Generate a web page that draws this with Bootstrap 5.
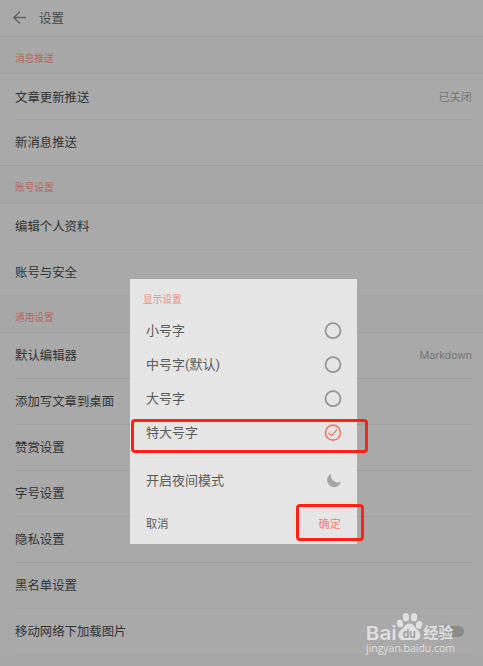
<!DOCTYPE html>
<html lang="zh-CN">
<head>
<meta charset="utf-8">
<meta name="viewport" content="width=device-width, initial-scale=1">
<title>设置</title>
<link href="https://cdn.jsdelivr.net/npm/bootstrap@5.3.0/dist/css/bootstrap.min.css" rel="stylesheet">
<style>
  body { font-family: Roboto, "Noto Sans CJK SC", sans-serif; font-size: 12.4px; line-height: 18px; background: #a9a9a9; color: #333; height: 666px; overflow: hidden; }
  .screen { height: 666px; overflow: hidden; }
  .topbar { height: 37px; border-bottom: 1px solid #9f9f9f; padding: 0 13px; gap: 13px; color: #484848; }
  .topbar span { padding-top: 1px; }
  .group-title { height: 37px; padding: 8px 15px 0; font-size: 9.7px; color: #b5695f; background: #a7a7a7; border-bottom: 1px solid #a1a1a1; }
  .group-title.tall { height: 38px; padding-top: 7px; }
  .settings { padding: 0 11px 0 15px; }
  .settings .setting { height: 46px; border-bottom: 1px solid #9f9f9f; padding-top: 1px; }
  .settings .setting.faint { border-color: #a5a5a5; }
  .settings.full .setting:last-child { margin: 0 -11px 0 -15px; padding: 1px 11px 0 15px; }
  .settings.messages .setting { padding-top: 2px; }
  .value { font-size: 11.2px; color: #777; }
  .tailband { height: 12px; background: #a7a7a7; }
  .toggle { width: 26px; height: 16px; margin-right: 8px; margin-bottom: 3px; }
  .dialog { left: 130px; top: 279px; width: 227px; height: 265px; background: #e5e5e5; color: #5a5a5a; font-size: 13px; }
  .dialog-title { height: 35px; padding: 12px 13px 0; font-size: 9.7px; color: #ec8f82; }
  .choice { height: 34px; padding: 0 15px 0 16px; }
  .rule { height: 1px; margin: 7px 13px 0; background: #e0e0e0; }
  .night { height: 45px; padding: 0 15px 0 16px; }
  .actions { height: 42px; padding: 1px 16px 0; font-size: 11.2px; }
  .accent { color: #ee8374; }
  .frame { border: 3px solid #ff2213; border-radius: 4px; }
  .frame-choice { left: 131px; top: 419px; width: 237px; height: 34px; }
  .frame-ok { left: 296px; top: 504px; width: 68px; height: 37px; }
  .brand { left: 364px; top: 610px; }
  svg { display: block; }
</style>
</head>
<body>
<main class="screen position-relative">
  <header class="topbar d-flex align-items-center">
    <svg width="13" height="14" viewBox="0 0 13 14" fill="none" stroke="#626262" stroke-width="1.3"><path d="M7 .5.800 6.500l6.200 6M.8 6.500H13"/></svg>
    <span>设置</span>
  </header>

  <div class="group-title d-flex align-items-center">消息推送</div>
  <div class="settings full messages">
    <div class="setting d-flex align-items-center justify-content-between"><span>文章更新推送</span><span class="value">已关闭</span></div>
    <div class="setting d-flex align-items-center">新消息推送</div>
  </div>

  <div class="group-title tall d-flex align-items-center">账号设置</div>
  <div class="settings full">
    <div class="setting faint d-flex align-items-center">编辑个人资料</div>
    <div class="setting faint d-flex align-items-center">账号与安全</div>
  </div>

  <div class="group-title d-flex align-items-center">通用设置</div>
  <div class="settings">
    <div class="setting d-flex align-items-center justify-content-between"><span>默认编辑器</span><span class="value">Markdown</span></div>
    <div class="setting d-flex align-items-center">添加写文章到桌面</div>
    <div class="setting d-flex align-items-center">赞赏设置</div>
    <div class="setting d-flex align-items-center">字号设置</div>
    <div class="setting d-flex align-items-center">隐私设置</div>
    <div class="setting faint d-flex align-items-center">黑名单设置</div>
    <div class="setting faint d-flex align-items-center justify-content-between"><span>移动网络下加载图片</span>
      <svg class="toggle" viewBox="0 0 26 16"><rect x="4" y="3" width="22" height="11" rx="5.5" fill="#8a8a8a"/><circle cx="6" cy="8" r="7.5" fill="#9d9d9d"/></svg>
    </div>
  </div>
  <div class="tailband"></div>

  <section class="dialog position-absolute">
    <div class="dialog-title">显示设置</div>
    <div class="choice d-flex align-items-center justify-content-between"><span>小号字</span><svg width="18" height="18" fill="none" stroke="#969696" stroke-width="1.8"><circle cx="9" cy="8.700" r="7.500"/></svg></div>
    <div class="choice d-flex align-items-center justify-content-between"><span>中号字(默认)</span><svg width="18" height="18" fill="none" stroke="#969696" stroke-width="1.8"><circle cx="9" cy="8.700" r="7.500"/></svg></div>
    <div class="choice d-flex align-items-center justify-content-between"><span>大号字</span><svg width="18" height="18" fill="none" stroke="#969696" stroke-width="1.8"><circle cx="9" cy="8.700" r="7.500"/></svg></div>
    <div class="choice d-flex align-items-center justify-content-between"><span>特大号字</span><svg width="18" height="18" fill="none" stroke="#ed7b69" stroke-width="1.7"><circle cx="9" cy="8.700" r="7.500"/><path d="m4.500 8.800 3 2.900 5.700-6.200" stroke-width="1.2"/></svg></div>
    <div class="rule"></div>
    <div class="night d-flex align-items-center justify-content-between"><span>开启夜间模式</span><svg width="16" height="16" viewBox="0 0 16 16"><path d="M5 .8C.3 3 0 9.500 3.700 12.600c3.900 3.200 9.800 1.700 11.300-3.800C10.200 11.200 4 7.300 5 .8Z" fill="#a6a6a6"/></svg></div>
    <div class="actions d-flex align-items-center justify-content-between"><span>取消</span><span class="accent">确定</span></div>
  </section>

  <div class="frame frame-choice position-absolute"></div>
  <div class="frame frame-ok position-absolute"></div>

  <svg class="brand position-absolute" width="96" height="48" viewBox="0 0 96 48" fill="#dfdfdf">
    <text x="1.800" y="29.500" font-family="Inter, sans-serif" font-weight="600" font-size="19" textLength="31" lengthAdjust="spacingAndGlyphs">Bai</text>
    <ellipse cx="36" cy="13.500" rx="3.100" ry="4" transform="rotate(-15 36 13.500)"/>
    <ellipse cx="42" cy="7.300" rx="3.100" ry="4.300"/>
    <ellipse cx="50" cy="7.300" rx="3.100" ry="4.300"/>
    <ellipse cx="55" cy="15" rx="3.100" ry="4" transform="rotate(15 55 15)"/>
    <path d="M45.500 13.500c-4 0-5 3.500-7.500 5.500-3.500 2.500-4 5-3.300 7.500 1.200 5 6 3.500 10.800 3.500s9.500 1.500 10.700-3.500c.6-3-.7-5-3.700-7.500-2.500-2-3-5.500-7-5.500Z"/>
    <text x="38.800" y="28" fill="#989898" font-family="Inter, sans-serif" font-weight="600" font-size="11.500" textLength="13" lengthAdjust="spacingAndGlyphs">du</text>
    <text x="59.200" y="28.300" font-family="Noto Sans CJK SC, sans-serif" font-weight="700" font-size="15" textLength="30" lengthAdjust="spacingAndGlyphs">经验</text>
    <text x="2" y="42" font-family="Open Sans, sans-serif" font-size="10.500" textLength="89">jingyan.baidu.com</text>
  </svg>
</main>
<script src="https://cdn.jsdelivr.net/npm/bootstrap@5.3.0/dist/js/bootstrap.bundle.min.js"></script>
</body>
</html>
